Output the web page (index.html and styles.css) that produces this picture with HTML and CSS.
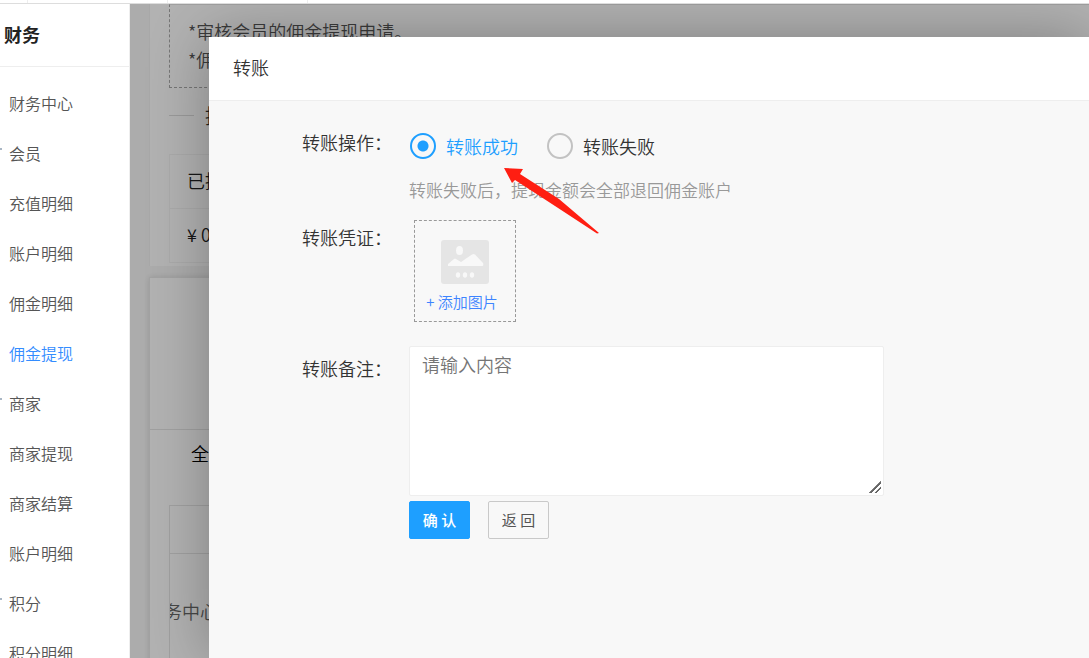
FILE: index.html
```html
<!DOCTYPE html>
<html lang="zh-CN">
<head>
<meta charset="utf-8">
<title>财务</title>
<link rel="stylesheet" href="styles.css">
</head>
<body>
<div class="app">
  <div class="tabstrip"><span class="tab tab-first"></span><span class="tab"></span><span class="tab"></span></div>
  <div class="workspace">
    <aside class="sidebar">
      <h1 class="sidebar-title">财务</h1>
      <nav class="menu">
        <a class="menu-item" href="#">财务中心</a>
        <a class="menu-item group" href="#">会员</a>
        <a class="menu-item" href="#">充值明细</a>
        <a class="menu-item" href="#">账户明细</a>
        <a class="menu-item" href="#">佣金明细</a>
        <a class="menu-item active" href="#">佣金提现</a>
        <a class="menu-item group" href="#">商家</a>
        <a class="menu-item" href="#">商家提现</a>
        <a class="menu-item" href="#">商家结算</a>
        <a class="menu-item" href="#">账户明细</a>
        <a class="menu-item group" href="#">积分</a>
        <a class="menu-item" href="#">积分明细</a>
      </nav>
    </aside>
    <main class="main">
      <section class="panel summary">
        <div class="notice"><p>*审核会员的佣金提现申请。</p><p>*佣</p></div>
        <div class="divider"><span>提</span></div>
        <table class="stats">
          <tr><th>已提</th></tr>
          <tr><td>¥ 0</td></tr>
        </table>
      </section>
      <section class="panel list">
        <div class="filters"></div>
        <div class="list-tabs">全</div>
        <div class="grid">
          <div class="grid-head"></div>
          <div class="grid-row"><span>务中心</span></div>
        </div>
      </section>
      <div class="shade"></div>
      <div class="dialog" role="dialog" aria-labelledby="dialog-title">
        <header class="dialog-header"><h2 id="dialog-title">转账</h2></header>
        <form class="dialog-form">
          <div class="row">
            <span class="label" id="op-label">转账操作：</span>
            <div class="field" role="radiogroup" aria-labelledby="op-label">
              <div class="radios">
                <label class="radio"><input type="radio" name="op" checked><span>转账成功</span></label>
                <label class="radio"><input type="radio" name="op"><span>转账失败</span></label>
              </div>
              <p class="hint">转账失败后，提现金额会全部退回佣金账户</p>
            </div>
          </div>
          <div class="row row-upload">
            <span class="label">转账凭证：</span>
            <button type="button" class="upload">
              <svg width="48" height="44" viewBox="0 0 48 44" aria-hidden="true">
                <rect width="48" height="44" rx="3" fill="#e5e5e5"/>
                <g fill="#f8f8f8">
                  <ellipse cx="18.500" cy="10.500" rx="3.500" ry="4.500"/>
                  <path d="M7 26V24L13 19Q14 18 15 19L20 22L31 14.500Q32.500 13.500 34 14.500L42 23Q43 26 41 26Z"/>
                  <ellipse cx="17" cy="35" rx="2.200" ry="2.700"/><ellipse cx="24" cy="35" rx="2.200" ry="2.700"/><ellipse cx="31" cy="35" rx="2.200" ry="2.700"/>
                </g>
              </svg>
              <span>+ 添加图片</span>
            </button>
          </div>
          <div class="row row-remark">
            <label class="label" for="remark">转账备注：</label>
            <div class="field">
              <textarea id="remark" placeholder="请输入内容"></textarea>
              <div class="actions">
                <button type="submit" class="btn primary">确 认</button>
                <button type="button" class="btn">返 回</button>
              </div>
            </div>
          </div>
        </form>
        <svg class="pointer" width="98" height="68" viewBox="0 0 98 68" aria-hidden="true">
          <path d="M1 1L20 2L17 7L56 32L96 66L94 66.500L52 39L12 13L9 16Z" fill="#ff1e12"/>
        </svg>
      </div>
    </main>
  </div>
</div>
</body>
</html>
```
FILE: styles.css
```css
* { box-sizing: border-box; }
body, h1, h2, p { margin: 0; }
body, button, textarea {
  font-family: "Noto Sans CJK SC", sans-serif;
  font-weight: 350;
}
body { font-size: 18px; color: #333; overflow: hidden; }
.app { display: flex; flex-direction: column; height: 100vh; }
.tabstrip { display: flex; flex: none; height: 4px; border-bottom: 1px solid #ddd; background: #fff; }
.tab { width: 140px; border-right: 1px solid #eee; }
.tab-first { width: 28px; }
.workspace { display: flex; flex: 1; min-height: 0; }

.sidebar { flex: none; width: 130px; background: #fff; border-right: 1px solid #eee; overflow: hidden; }
.sidebar-title { height: 63px; padding-left: 4px; line-height: 60px; font-size: 18px; font-weight: 700; color: #222; border-bottom: 1px solid #eee; }
.menu { padding-top: 11px; }
.menu-item { display: flex; align-items: center; height: 50px; padding-left: 9px; font-size: 16px; color: #555; text-decoration: none; }
.menu-item.active { color: #338cff; }
.group { padding-left: 0; }
.group::before { content: ""; width: 2px; height: 2px; margin: -8px 7px 0 0; background: #a9b6c4; }

.main { position: relative; flex: 1; min-width: 0; overflow: hidden; background: #f7f7f7; }
.panel { margin-left: 19px; padding-left: 19px; background: #fff; border-left: 1px solid #f1f1f1; }
.summary { height: 262px; }
.notice { height: 84px; padding: 12px 0 0 18px; border: 1px dashed #aaa; border-top: 1px solid #e6e6e6; border-right: 0; line-height: 28px; color: #555; }
.divider { display: flex; align-items: center; height: 54px; font-size: 20px; }
.divider::before { content: ""; width: 25px; margin-right: 11px; border-top: 1px solid #ddd; }
.divider::after { content: ""; flex: 1; border-top: 1px solid #ddd; }
.stats { width: 100%; border: 1px solid #f6f6f6; border-collapse: collapse; margin-top: 12px; color: #222; }
.stats th, .stats td { height: 54px; padding: 0 17px 4px; text-align: left; font-weight: 350; border: 1px solid #f4f4f4; }
.list { margin-top: 11px; border: 1px solid #e8e8e8; box-shadow: 0 0 6px rgba(0, 0, 0, .12); }
.filters { height: 152px; margin-left: -19px; border-bottom: 1px solid #e5e5e5; }
.list-tabs { height: 75px; padding: 0 22px; line-height: 46px; color: #000; }
.grid { height: 240px; border: 1px solid #e6e6e6; }
.grid-head { height: 48px; border-bottom: 1px solid #e6e6e6; }
.grid-row { display: flex; align-items: center; height: 114px; color: #666; overflow: hidden; }
.grid-row span { margin-left: -6px; }

.shade { position: absolute; inset: 0; background: rgba(0, 0, 0, .3); }
.dialog { position: absolute; top: 33px; right: 0; bottom: 0; left: 79px; background: #f8f8f8; border-radius: 2px 0 0 0; box-shadow: 1px 1px 62px rgba(0, 0, 0, .3); }
.dialog-header { height: 64px; padding-left: 24px; background: #fff; border-bottom: 1px solid #eee; }
.dialog-header h2 { font-size: 18px; font-weight: 350; line-height: 60px; }
.dialog-form { padding: 27px 24px 0 70px; }
.row { display: flex; align-items: flex-start; }
.label { flex: none; width: 130px; padding-left: 23px; line-height: 28px; white-space: nowrap; }
.field { flex: 1; min-width: 0; }
.radios { display: flex; gap: 28px; padding-top: 4px; }
.radio { display: flex; align-items: center; gap: 10px; height: 28px; margin-left: 1px; }
.radio input { appearance: none; width: 26px; height: 26px; margin: 0; border: 2px solid #c2c2c2; border-radius: 50%; }
.radio input:checked { border-color: #1e9fff; background: radial-gradient(circle, #1e9fff 5px, transparent 6px); }
.radio input:checked + span { color: #1e9fff; }
.hint { margin-top: 16px; font-size: 17px; line-height: 28px; color: #999; }
.row-upload { margin-top: 16px; }
.row-upload .label { margin-top: 3px; width: 135px; }
.upload { display: flex; flex-direction: column; align-items: center; width: 102px; height: 102px; padding: 19px 0 0; border: 1px dashed #999; background: transparent; color: #3d84ff; font-size: 15px; line-height: 22px; }
.upload span { margin-top: 7px; margin-right: 6px; }
.row-remark { margin-top: 24px; }
.row-remark .label { margin-top: 8px; }
textarea { display: block; width: 57%; min-width: 475px; height: 150px; padding: 3px 12px; font-size: 18px; line-height: 28px; border: 1px solid #eee; border-radius: 2px; background: #fff; outline: none; }
textarea::placeholder { color: #757575; }
textarea::-webkit-resizer { background: linear-gradient(135deg, transparent 53%, #666 54%, #666 62%, transparent 63%, transparent 73%, #666 74%, #666 82%, transparent 83%) 0 0 / 13px 13px no-repeat; }
.actions { display: flex; gap: 18px; margin-top: 5px; }
.btn { height: 38px; padding: 0 12px 2px; border: 1px solid #c9c9c9; border-radius: 2px; background: transparent; color: #555; font-size: 15px; font-weight: 400; min-width: 61px; white-space: nowrap; }
.primary { border-color: #1e9fff; background: #1e9fff; color: #fff; font-weight: 500; }
.pointer { position: absolute; top: 130px; left: 294px; }
```
